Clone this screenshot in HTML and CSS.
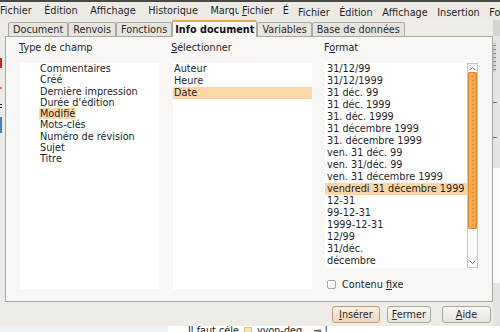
FILE: index.html
```html
<!DOCTYPE html>
<html lang="fr">
<head>
<meta charset="utf-8">
<title>Champs - Info document</title>
<link rel="stylesheet" href="styles.css">
</head>
<body>
<div class="menubar">
  <div class="menu m1"><span>Fichier</span><span>Édition</span><span>Affichage</span><span>Historique</span><span>Marque-pages</span></div>
  <div class="menu m2"><span><u>F</u>ichier</span><span>Édition</span></div>
  <div class="menu m3"><span>Fichier</span><span>Édition</span><span>Affichage</span><span>Insertion</span><span>Format</span></div>
</div>
<div class="middle">
  <div class="edge-left">
    <i class="mk red"></i>
    <i class="mk dots-o"></i>
    <i class="mk dots-k"></i>
    <i class="mk blue"></i>
  </div>
  <div class="dialog">
    <div class="tabs">
      <div class="tab">Document</div>
      <div class="tab">Renvois</div>
      <div class="tab">Fonctions</div>
      <div class="tab active">Info document</div>
      <div class="tab">Variables</div>
      <div class="tab">Base de données</div>
    </div>
    <div class="panel">
      <div class="col c1">
        <div class="hdr"><u>T</u>ype de champ</div>
        <ul class="list">
          <li>Commentaires</li>
          <li>Créé</li>
          <li>Dernière impression</li>
          <li>Durée d'édition</li>
          <li><span class="sel">Modifié</span></li>
          <li>Mots-clés</li>
          <li>Numéro de révision</li>
          <li>Sujet</li>
          <li>Titre</li>
        </ul>
      </div>
      <div class="col c2">
        <div class="hdr"><u>S</u>électionner</div>
        <ul class="list">
          <li>Auteur</li>
          <li>Heure</li>
          <li class="sel">Date</li>
        </ul>
      </div>
      <div class="col c3">
        <div class="hdr">F<u>o</u>rmat</div>
        <div class="lbox">
          <ul class="list">
            <li>31/12/99</li>
            <li>31/12/1999</li>
            <li>31 déc. 99</li>
            <li>31 déc. 1999</li>
            <li>31. déc. 1999</li>
            <li>31 décembre 1999</li>
            <li>31. décembre 1999</li>
            <li>ven. 31 déc. 99</li>
            <li>ven. 31/déc. 99</li>
            <li>ven. 31 décembre 1999</li>
            <li class="sel">vendredi 31 décembre 1999</li>
            <li>12-31</li>
            <li>99-12-31</li>
            <li>1999-12-31</li>
            <li>12/99</li>
            <li>31/déc.</li>
            <li>décembre</li>
          </ul>
          <div class="scrollbar">
            <div class="arrow up"><svg width="7" height="5" viewBox="0 0 7 5"><polyline points="1,4 3.5,1.5 6,4" fill="none" stroke="#777" stroke-width="1"/></svg></div>
            <div class="thumb"></div>
            <div class="trough"></div>
            <div class="arrow down"><svg width="7" height="5" viewBox="0 0 7 5"><polyline points="1,1 3.5,3.5 6,1" fill="none" stroke="#777" stroke-width="1"/></svg></div>
          </div>
        </div>
        <label class="check"><span class="box"></span><span>Contenu <u>f</u>ixe</span></label>
      </div>
    </div>
    <div class="buttons">
      <div class="btn default"><u>I</u>nsérer</div>
      <div class="btn fermer"><u>F</u>ermer</div>
      <div class="btn aide"><u>A</u>ide</div>
    </div>
  </div>
  <div class="edge-right">
    <i class="er top"></i>
    <i class="er mark"></i>
    <i class="er line"></i>
    <i class="er line2"></i>
    <i class="er pale"></i>
  </div>
</div>
<div class="bottom">
  <div class="bl"></div>
  <div class="br"><span>Il faut céle</span><i class="ico"></i><span>yvon-deg</span><span class="dash">⊸ |</span></div>
</div>
</body>
</html>
```

FILE: styles.css
```css
html, body {
  margin: 0;
  padding: 0;
}
body {
  width: 500px;
  height: 332px;
  overflow: hidden;
  background: #efebe7;
  font-family: "DejaVu Sans", "Noto Sans", sans-serif;
  font-size: 9.7px;
  color: #1e1e1e;
  display: flex;
  flex-direction: column;
}
u {
  text-decoration: underline;
  text-underline-offset: 1px;
  text-decoration-thickness: 1px;
}

/* menus of the windows behind */
.menubar {
  height: 18px;
  flex: none;
  border-top: 2px solid #4a4944;
  background: #edeae6;
  display: flex;
  white-space: nowrap;
}
.menu {
  display: flex;
  overflow: hidden;
  line-height: 18px;
  flex: none;
}
.menu span { flex: none; }
.m1 { width: 239px; gap: 12.5px; }
.m2 { width: 47px; gap: 9px; padding-left: 3px; }
.m3 {
  flex: 1;
  gap: 9.5px;
  padding-left: 9px;
  padding-top: 4px;
  line-height: 14px;
}

.middle {
  display: flex;
  height: 306px;
  flex: none;
}
.edge-left {
  width: 5px;
  flex: none;
  display: flex;
  flex-direction: column;
  padding-top: 38px;
  box-sizing: border-box;
  background: #ecebe8;
}
.mk { display: block; width: 2px; }
.mk.red { height: 10px; background: #c8262a; }
.mk.dots-o { height: 2px; margin-top: 19px; background: #e0785a; }
.mk.dots-k { height: 6px; margin-top: 15px; background: repeating-linear-gradient(#222 0 1px, transparent 1px 3px); }
.mk.blue { height: 16px; margin-top: 7px; background: #3c7fbf; }

.dialog {
  width: 488px;
  flex: none;
  display: flex;
  flex-direction: column;
}
.edge-right {
  flex: 1;
  background: #e6e4e0;
  display: flex;
  flex-direction: column;
}
.er { display: block; }
.er.top { height: 16px; background: #d6d4d0; }
.er.mark { height: 30px; margin-top: 6px; background: repeating-linear-gradient(#d4d2ce 0 3px, #8f8d88 3px 4px); width: 3px; }
.er.line { height: 1px; margin-top: 30px; background: #666; width: 4px; }
.er.line2 { height: 1px; margin-top: 34px; background: #666; width: 4px; }
.er.pale { height: 115px; margin-top: 30px; background: #fafaf9; }

/* tabs */
.tabs {
  height: 16px;
  flex: none;
  display: flex;
  align-items: flex-end;
  padding-left: 3px;
  position: relative;
  z-index: 1;
  white-space: nowrap;
}
.tab {
  height: 14px;
  box-sizing: border-box;
  border: 1px solid #aba7a1;
  border-bottom: none;
  border-radius: 2px 2px 0 0;
  background: #e7e4e0;
  padding: 0 4px;
  line-height: 13px;
  color: #2a2a2a;
}
.tab.active {
  height: 17px;
  margin-bottom: -1px;
  border-top: 2px solid #f0a54c;
  background: #faf9f8;
  font-weight: bold;
  padding: 0 2px;
  line-height: 15px;
  color: #111;
}

/* panel */
.panel {
  height: 266px;
  flex: none;
  box-sizing: border-box;
  border: 1px solid #aaa6a0;
  background: #f8f7f6;
  padding: 5px 13px 12px;
  display: grid;
  grid-template-columns: 140px 141px 155px;
  grid-template-rows: minmax(0, 1fr);
  column-gap: 12px;
}
.col {
  display: flex;
  flex-direction: column;
  min-height: 0;
}
.hdr {
  height: 12px;
  line-height: 12px;
  margin-bottom: 9px;
  white-space: nowrap;
}
.list {
  list-style: none;
  margin: 0;
  padding: 0;
  background: #fff;
  white-space: nowrap;
}
.c1 .list {
  margin-left: 1px;
  flex: 1;
  line-height: 11.25px;
  padding-left: 19px;
}
.c1 .list li { padding-left: 1px; }
.c1 .sel { padding: 0 1px; margin-left: -1px; }
.c2 .list {
  margin-left: 2px;
  flex: 1;
  line-height: 12px;
}
.c2 .list li { padding-left: 1px; }
.sel { background: #fbd7a6; }

.lbox {
  margin-left: 1px;
  height: 205px;
  flex: none;
  display: flex;
  background: #fff;
}
.lbox .list {
  flex: 1;
  line-height: 12px;
  overflow: hidden;
}
.lbox .list li { padding-left: 2px; }
.scrollbar {
  width: 11px;
  margin-right: 1px;
  box-sizing: border-box;
  border: 1px solid #c9c5bf;
  background: #fbfbfa;
  display: flex;
  flex-direction: column;
}
.arrow {
  height: 8px;
  display: flex;
  align-items: center;
  justify-content: center;
}
.arrow.down { height: 10px; }
.thumb {
  height: 157px;
  box-sizing: border-box;
  border: 1px solid #d88a30;
  border-radius: 1px;
  background: linear-gradient(90deg, #f6ad55, #f4a040);
  position: relative;
}
.thumb::after {
  content: "";
  position: absolute;
  left: 3px;
  top: 3px;
  bottom: 3px;
  width: 1px;
  background: repeating-linear-gradient(#d9862a 0 1px, transparent 1px 4px);
}
.trough { flex: 1; }

.check {
  display: flex;
  align-items: center;
  height: 12px;
  margin-top: 11px;
  padding-left: 3px;
  white-space: nowrap;
}
.box {
  width: 9px;
  height: 9px;
  box-sizing: border-box;
  border: 1px solid #a9a59f;
  border-radius: 2px;
  background: linear-gradient(#fff, #f0eeeb);
  margin-right: 6px;
  flex: none;
}

/* buttons */
.buttons {
  height: 24px;
  flex: none;
  box-sizing: border-box;
  display: flex;
  justify-content: flex-end;
  align-items: flex-start;
  gap: 7px;
  padding: 4px 2px 0 0;
}
.btn {
  height: 17px;
  box-sizing: border-box;
  border: 1px solid #a9a59f;
  border-radius: 3px;
  background: linear-gradient(#f8f7f5, #e7e4e0);
  padding: 0 6px;
  line-height: 15px;
  text-align: center;
  color: #2a2a2a;
  white-space: nowrap;
}
.btn.default {
  background: linear-gradient(#fcefe1, #f1d6b8);
  border-color: #b49c84;
}
.btn.fermer { padding: 0 4px; }
.btn.aide {
  width: 49px;
  margin-left: 4px;
}

/* bottom strip */
.bottom {
  height: 6px;
  flex: none;
  display: flex;
  overflow: hidden;
}
.bl {
  width: 168px;
  background: #edf1f5;
}
.br {
  flex: 1;
  background: #fff;
  display: flex;
  align-items: flex-start;
  gap: 5px;
  padding-left: 20px;
  line-height: 10px;
  white-space: nowrap;
  color: #222;
}
.ico {
  display: block;
  width: 8px;
  height: 8px;
  margin-top: 1px;
  background: #f3e6a6;
  border: 1px solid #d9c46a;
  box-sizing: border-box;
}
.dash { margin-left: 6px; }
```
